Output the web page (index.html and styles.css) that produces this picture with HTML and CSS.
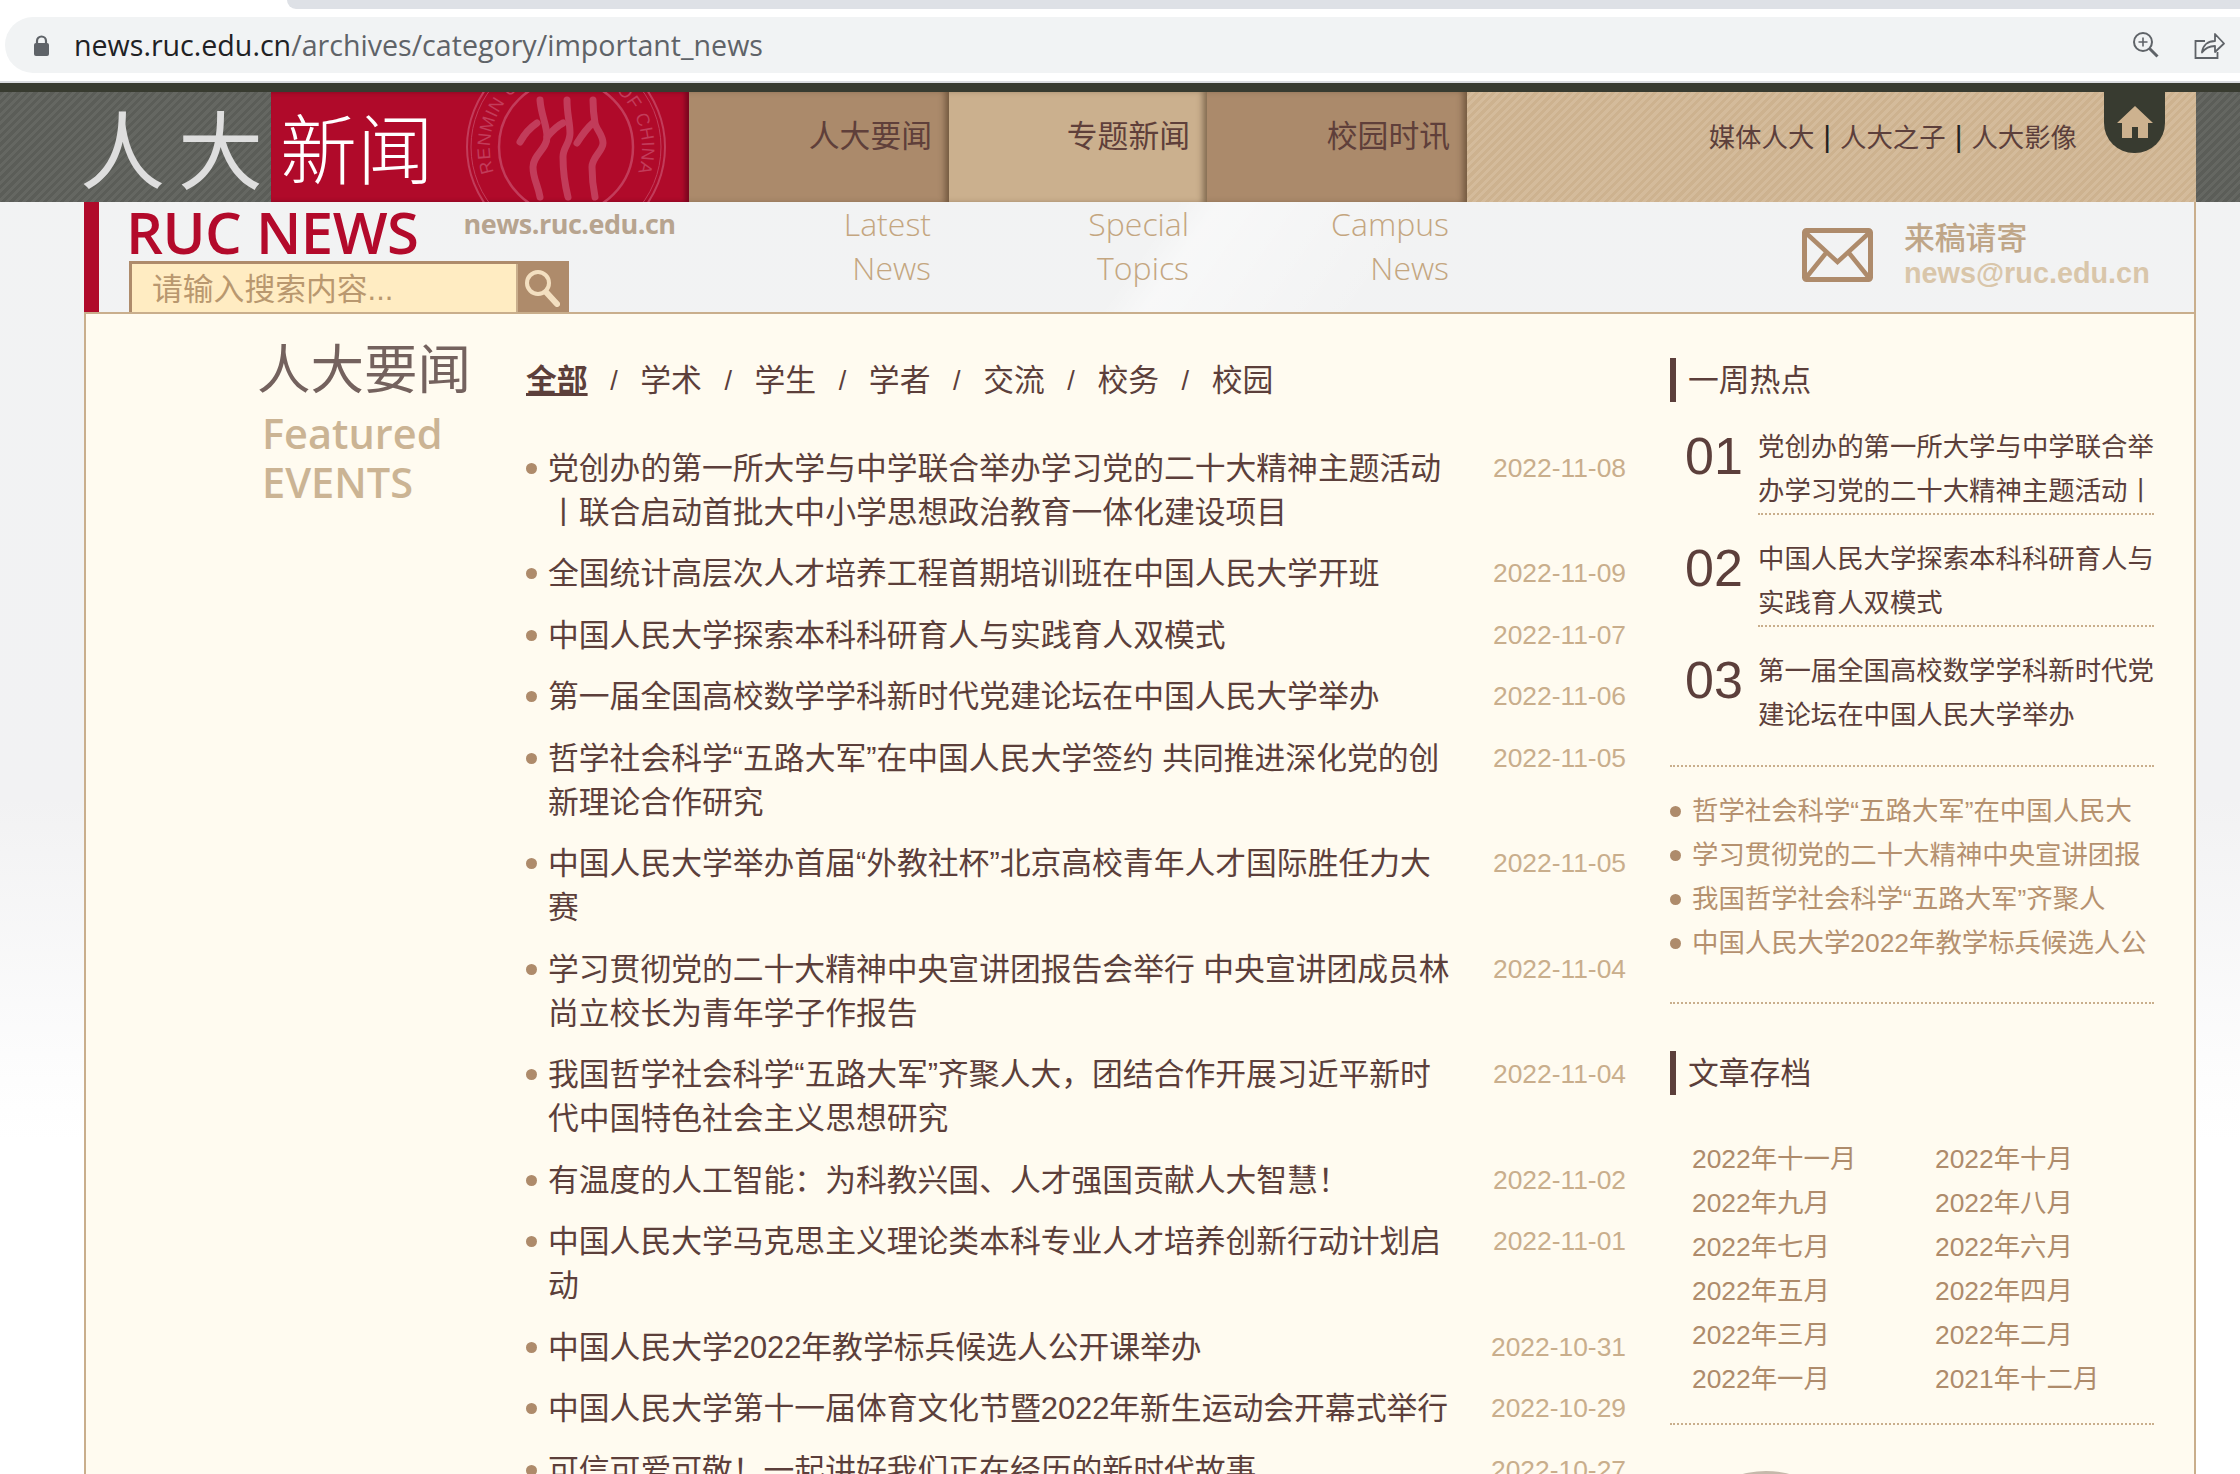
FILE: index.html
```html
<!DOCTYPE html>
<html lang="zh-CN">
<head>
<meta charset="utf-8">
<title>人大要闻</title>
<link rel="stylesheet" href="styles.css">
</head>
<body>
<div class="chrome">
  <div class="tabstrip"></div>
  <div class="addr">
    <svg class="lock" width="17" height="21" viewBox="0 0 17 21"><path d="M4 9V6a4.500 4.500 0 0 1 9 0v3" fill="none" stroke="#5f6368" stroke-width="2.200"/><rect x="1" y="8" width="15" height="13" rx="2" fill="#5f6368"/></svg>
    <div class="url"><span class="host">news.ruc.edu.cn</span>/archives/category/important_news</div>
    <svg class="zoomic" width="28" height="28" viewBox="0 0 28 28"><circle cx="11" cy="11" r="9" fill="none" stroke="#5f6368" stroke-width="2"/><path d="M11 6.500v9M6.500 11h9" stroke="#5f6368" stroke-width="1.600"/><path d="M17.500 17.500l8 8" stroke="#5f6368" stroke-width="3"/></svg>
    <svg class="share" width="31" height="28" viewBox="0 0 31 28"><path d="M11 10H1.500v17h22v-6" fill="none" stroke="#5f6368" stroke-width="1.800"/><path d="M8 21c1-7 6-11 13-11V3l9 9.500-9 8.500v-6c-5 0-9 1-13 6.500z" fill="#f1f3f4" stroke="#5f6368" stroke-width="1.800" stroke-linejoin="round"/></svg>
  </div>
</div>
<div class="darkbar"></div>
<nav class="nav">
  <div class="logo-gray"><span class="logo-renda">人大</span></div>
  <div class="logo-red">
    <span class="logo-xinwen">新闻</span>
    <svg class="seal" width="220" height="110" viewBox="456 92 220 110">
      <defs><path id="sealarc" d="M495 175a76 76 0 1 1 142 0"/></defs>
      <g fill="none" stroke="#c23c5a">
        <circle cx="566" cy="147" r="99" stroke-width="2"/>
        <circle cx="566" cy="147" r="95" stroke-width="1"/>
        <circle cx="566" cy="147" r="67" stroke-width="2.500"/>
      </g>
      <text class="seal-text"><textPath href="#sealarc" startOffset="1%" textLength="288">RENMIN UNIVERSITY OF CHINA</textPath></text>
      <g fill="none" stroke="#c23c5a" stroke-width="7" stroke-linecap="round" stroke-linejoin="round">
        <path d="M540 100C541 115 547 125 547 137S533 155 533 167 538 185 540 197"/>
        <path d="M520 142C525 133 531 127 537 123"/>
        <path d="M567 100C567 115 570 122 570 133S563 147 563 157 565 185 568 197"/>
        <path d="M547 137C552 131 557 126 563 123"/>
        <path d="M593 100C593 110 594 117 595 123S603 135 603 143 592 157 592 167 593 187 595 197"/>
        <path d="M577 143C582 135 587 128 593 123"/>
      </g>
    </svg>
  </div>
  <a class="nav-cell">人大要闻</a>
  <a class="nav-cell nav-cell-on">专题新闻</a>
  <a class="nav-cell">校园时讯</a>
  <div class="nav-links">
    <span class="links">媒体人大<i>|</i>人大之子<i>|</i>人大影像</span>
    <div class="home">
      <svg width="38" height="33" viewBox="0 0 38 33"><path d="M19 1L1 18h5v15h10V22h6v11h10V18h5z" fill="#cdb28f"/></svg>
    </div>
  </div>
  <div class="logo-gray"></div>
</nav>
<div class="page">
  <header class="sub">
    <div class="brand">
      <div class="brand-top"><span class="ruc">RUC NEWS</span><span class="domain">news.ruc.edu.cn</span></div>
      <div class="search">
        <span class="placeholder">请输入搜索内容...</span>
        <span class="search-btn">
          <svg width="36" height="38" viewBox="0 0 36 38"><circle cx="14" cy="14" r="11" fill="none" stroke="#f3dfc0" stroke-width="4"/><path d="M22 23l11 12" stroke="#f3dfc0" stroke-width="6" stroke-linecap="round"/></svg>
        </span>
      </div>
    </div>
    <div class="en-cell">Latest<br>News</div>
    <div class="en-cell">Special<br>Topics</div>
    <div class="en-cell">Campus<br>News</div>
    <div class="mail">
      <svg width="71" height="54" viewBox="0 0 71 54"><rect x="2.500" y="2.500" width="66" height="49" rx="2" fill="none" stroke="#ae8b6b" stroke-width="5"/><path d="M4 5l31.500 29L67 5M3 51l21-26M68 51L47 25" fill="none" stroke="#ae8b6b" stroke-width="4.500"/></svg>
      <div class="mail-text">
        <div class="mail-cn">来稿请寄</div>
        <div class="mail-en">news@ruc.edu.cn</div>
      </div>
    </div>
  </header>
  <main class="content">
    <aside class="left">
      <h1 class="left-cn">人大要闻</h1>
      <div class="left-en">Featured<br>EVENTS</div>
    </aside>
    <section class="main">
      <div class="tabs">
        <a class="tab tab-on">全部</a><i>/</i><a class="tab">学术</a><i>/</i><a class="tab">学生</a><i>/</i><a class="tab">学者</a><i>/</i><a class="tab">交流</a><i>/</i><a class="tab">校务</a><i>/</i><a class="tab">校园</a>
      </div>
      <ul class="list">
        <li><a>党创办的第一所大学与中学联合举办学习党的二十大精神主题活动丨联合启动首批大中小学思想政治教育一体化建设项目</a><time>2022-11-08</time></li>
        <li><a>全国统计高层次人才培养工程首期培训班在中国人民大学开班</a><time>2022-11-09</time></li>
        <li><a>中国人民大学探索本科科研育人与实践育人双模式</a><time>2022-11-07</time></li>
        <li><a>第一届全国高校数学学科新时代党建论坛在中国人民大学举办</a><time>2022-11-06</time></li>
        <li><a>哲学社会科学“五路大军”在中国人民大学签约 共同推进深化党的创新理论合作研究</a><time>2022-11-05</time></li>
        <li><a>中国人民大学举办首届“外教社杯”北京高校青年人才国际胜任力大赛</a><time>2022-11-05</time></li>
        <li><a>学习贯彻党的二十大精神中央宣讲团报告会举行 中央宣讲团成员林尚立校长为青年学子作报告</a><time>2022-11-04</time></li>
        <li><a>我国哲学社会科学“五路大军”齐聚人大，团结合作开展习近平新时代中国特色社会主义思想研究</a><time>2022-11-04</time></li>
        <li><a>有温度的人工智能：为科教兴国、人才强国贡献人大智慧！</a><time>2022-11-02</time></li>
        <li><a>中国人民大学马克思主义理论类本科专业人才培养创新行动计划启动</a><time>2022-11-01</time></li>
        <li><a>中国人民大学2022年教学标兵候选人公开课举办</a><time>2022-10-31</time></li>
        <li><a>中国人民大学第十一届体育文化节暨2022年新生运动会开幕式举行</a><time>2022-10-29</time></li>
        <li><a>可信可爱可敬！一起讲好我们正在经历的新时代故事</a><time>2022-10-27</time></li>
      </ul>
    </section>
    <aside class="side">
      <h2 class="side-h">一周热点</h2>
      <ol class="hot">
        <li><b>01</b><a>党创办的第一所大学与中学联合举办学习党的二十大精神主题活动丨</a></li>
        <li><b>02</b><a>中国人民大学探索本科科研育人与实践育人双模式</a></li>
        <li><b>03</b><a>第一届全国高校数学学科新时代党建论坛在中国人民大学举办</a></li>
      </ol>
      <ul class="more">
        <li>哲学社会科学“五路大军”在中国人民大</li>
        <li>学习贯彻党的二十大精神中央宣讲团报</li>
        <li>我国哲学社会科学“五路大军”齐聚人</li>
        <li>中国人民大学2022年教学标兵候选人公</li>
      </ul>
      <h2 class="side-h">文章存档</h2>
      <div class="archive">
        <a>2022年十一月</a><a>2022年十月</a>
        <a>2022年九月</a><a>2022年八月</a>
        <a>2022年七月</a><a>2022年六月</a>
        <a>2022年五月</a><a>2022年四月</a>
        <a>2022年三月</a><a>2022年二月</a>
        <a>2022年一月</a><a>2021年十二月</a>
      </div>
      <div class="photo"></div>
    </aside>
  </main>
</div>
</body>
</html>
```
FILE: styles.css
```css
* { box-sizing: border-box; }
html, body { margin: 0; padding: 0; }
body {
  height: 1474px;
  overflow: hidden;
  font-family: "Liberation Sans", "Noto Sans CJK SC", sans-serif;
  color: #5c3f3b;
  background: linear-gradient(180deg, #f2f3f3 0, #f2f2f3 800px, #fdfdfd 1080px, #fff 1140px);
}
a { color: inherit; text-decoration: none; }
ul, ol { list-style: none; margin: 0; padding: 0; }
h1, h2 { margin: 0; font-weight: 400; }
i { font-style: normal; }

/* browser chrome */
.chrome { height: 83px; background: #fff; border-bottom: 2px solid #dadce0; }
.tabstrip { height: 9px; margin-left: 287px; background: #dee1e6; border-bottom-left-radius: 12px; }
.addr {
  display: flex; align-items: center;
  height: 56px; margin: 8px 0 0 5px; padding-left: 28px;
  background: #f1f3f4; border-radius: 28px 0 0 28px;
}
.url { margin-left: 24px; font: 28.600px/56px "Open Sans", sans-serif; color: #5f6368; flex: 1; }
.host { color: #202124; }
.zoomic { margin-right: 34px; }
.share { margin-right: 15px; }

.darkbar { height: 9px; background: #383b30; }

/* nav */
.nav { display: grid; grid-template-columns: 271px 418px 260px 258px 260px 729px 44px; height: 110px; }
.logo-gray { background: repeating-linear-gradient(135deg, #5b5d58 0 3px, #656762 3px 6px); }
.logo-renda {
  display: block; margin: 8px 0 0 80px;
  font: 400 85px/92px "Noto Sans CJK SC", sans-serif; letter-spacing: 13px; white-space: nowrap;
  color: #dedede;
}
.logo-red { position: relative; background: #b00a2a; box-shadow: inset -4px 0 4px rgba(70, 0, 20, .5); overflow: hidden; }
.logo-xinwen { display: block; margin: 10px 0 0 9px; font: 300 77px/88px "Noto Sans CJK SC", sans-serif; color: #fff; }
.seal { position: absolute; left: 185px; top: 0; }
.seal-text { font: 18px "Liberation Sans", sans-serif; fill: #c23c5a; }
.nav-cell {
  padding: 23px 17px 0 0; text-align: right;
  font-size: 30.800px; line-height: 44px; color: #5f3f3a;
  background: #ab8a6b; box-shadow: inset -6px 0 6px -2px rgba(70, 50, 30, .55);
}
.nav-cell-on { background: #cbb08e; }
.nav-links {
  position: relative; padding: 23px 119px 0 0; text-align: right;
  font-size: 26.400px; line-height: 44px; color: #5c3f3b;
  background: repeating-linear-gradient(135deg, #cdb28f 0 3px, #d4bb9b 3px 6px);
}
.links i { margin: 0 9px; color: #222; font-size: 30px; }
.home {
  position: absolute; left: 637px; top: 0; width: 61px; height: 61px;
  display: flex; justify-content: center; padding-top: 13px;
  background: #383b30; border-radius: 0 0 30px 30px;
}
.home svg { display: block; }

/* page */
.page { width: 2112px; margin-left: 84px; border-right: 2px solid #c9ae8c; }
.sub {
  display: grid; grid-template-columns: 605px 260px 258px 260px 1fr; height: 110px;
  background: linear-gradient(125deg, transparent 50%, rgba(255, 255, 255, .45) 52%, transparent 62%);
}
.brand { border-left: 15px solid #b00a2a; padding-left: 27px; }
.brand-top { display: flex; height: 59px; }
.ruc { font: 600 58px/59px "Open Sans", sans-serif; color: #b30a2b; letter-spacing: -.5px; white-space: nowrap; }
.domain { margin: 2px 0 0 45px; font: 700 27px/40px "Open Sans", sans-serif; color: #b7a48f; letter-spacing: -.5px; }
.search { display: flex; width: 440px; height: 51px; margin-left: 3px; border: 3px solid #ae8b6b; border-bottom: 0; background: #ffecc2; }
.placeholder { flex: 1; padding-left: 20px; font-size: 30.800px; line-height: 52px; color: #b9986f; }
.search-btn { width: 50px; display: flex; justify-content: center; padding-top: 5px; background: #ae8b6b; border-left: 2px solid #c9ae8c; }
.en-cell { padding: 0 18px 0 0; text-align: right; font: 300 32px/44px "Open Sans", sans-serif; color: #c4a680; }
.mail { display: flex; padding-left: 335px; }
.mail svg { margin-top: 26px; flex: none; }
.mail-text { margin-left: 31px; padding-top: 15px; white-space: nowrap; }
.mail-cn { font-size: 30.800px; line-height: 44px; font-weight: 500; color: #bfa688; }
.mail-en { font-size: 28.800px; line-height: 30px; font-weight: 700; color: #d9c6aa; margin-top: -3px; }

.content {
  display: grid; grid-template-columns: 440px 1100px 484px; column-gap: 0;
  height: 1162px; overflow: hidden;
  background: #fffbf0; border-top: 2px solid #c9ae8c; border-left: 2px solid #c9ae8c;
}
.left { padding: 20px 0 0 171px; }
.left-cn { font: 400 53.500px/64px "Noto Sans CJK SC", sans-serif; color: #74625e; white-space: nowrap; }
.left-en { margin: 11px 0 0 5px; font: 600 41.500px/49px "Open Sans", sans-serif; color: #cbb494; }

.main { padding-top: 44px; }
.tabs { display: flex; height: 44px; font-size: 30.800px; line-height: 46px; }
.tabs i { width: 52.700px; text-align: center; font-size: 27px; }
.tab-on { font-weight: 700; text-decoration: underline; }
.list { margin-top: 44.500px; }
.list li { position: relative; display: flex; justify-content: space-between; padding: 0 0 17.500px 22px; }
.list li::before { content: ""; position: absolute; left: 0; top: 16px; width: 11px; height: 11px; border-radius: 50%; background: #ae8b6b; }
.list a { width: 905px; font-size: 30.800px; line-height: 44px; }
.list time { font-size: 26.400px; line-height: 42px; color: #c9ae8c; }

.side { margin-left: 44px; padding-top: 44px; width: 484px; }
.side-h { height: 44px; padding-left: 12px; border-left: 6px solid #5c3f3b; font-size: 30.800px; line-height: 46px; }
.hot { margin-top: 23px; }
.hot li { position: relative; margin-bottom: 22px; padding-left: 88px; }
.hot b { position: absolute; left: 15px; top: 0; font-weight: 400; font-size: 52px; line-height: 62px; }
.hot a { display: block; font-size: 26.400px; line-height: 44px; border-bottom: 2px dotted #c9ae8c; }
.hot li:last-child { margin-bottom: 0; }
.hot li:last-child a { border-bottom: 0; padding-bottom: 28px; }
.more { position: relative; padding: 22px 0 37px 22px; border-top: 2px dotted #c9ae8c; border-bottom: 2px dotted #c9ae8c; margin-bottom: 47px; }
.more li { position: relative; height: 44px; font-size: 26.400px; line-height: 44px; color: #b5916f; white-space: nowrap; }
.more li::before { content: ""; position: absolute; left: -22px; top: 17px; width: 11px; height: 11px; border-radius: 50%; background: #ae8b6b; }
.archive {
  display: grid; grid-template-columns: 243px 1fr; grid-auto-rows: 44px;
  margin-top: 42px; padding: 0 0 22px 22px; border-bottom: 2px dotted #c9ae8c;
  font-size: 26.400px; line-height: 44px; color: #ae8b6b;
}
.photo { width: 182px; height: 182px; margin: 46px 0 0 5px; border-radius: 50%; background: #c5b9ab; }
```
